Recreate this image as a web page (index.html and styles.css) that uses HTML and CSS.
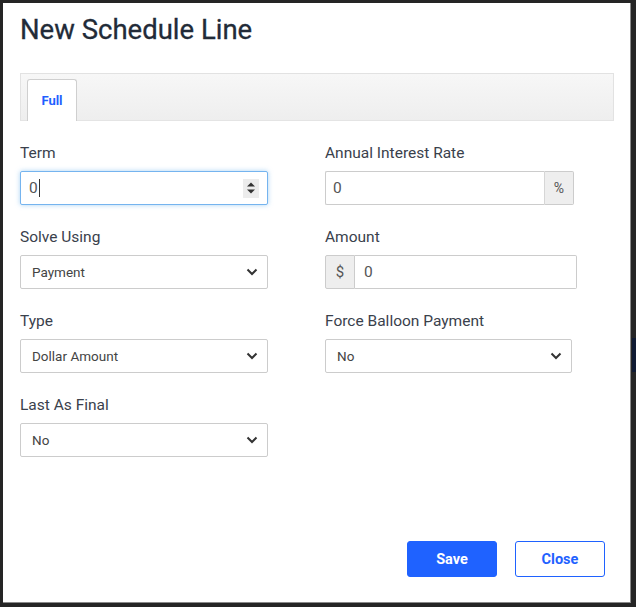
FILE: index.html
```html
<!DOCTYPE html>
<html>
<head>
<meta charset="utf-8">
<link rel="stylesheet" href="styles.css">
</head>
<body>
<div class="backdrop-strip"></div>
<div class="modal">
  <h1 class="title">New Schedule Line</h1>
  <div class="tabs">
    <div class="tab active">Full</div>
  </div>
  <div class="form">
    <div class="field">
      <div class="label">Term</div>
      <div class="control focus w248">
        <span class="value">0<span class="caret"></span></span>
        <span class="spinner">
          <svg width="10" height="14" viewBox="0 0 10 14"><path d="M1 5.5 L5 1.5 L9 5.5 Z M1 8.5 L5 12.5 L9 8.5 Z" fill="#333"/></svg>
        </span>
      </div>
    </div>
    <div class="field">
      <div class="label">Annual Interest Rate</div>
      <div class="group w249">
        <div class="control grow"><span class="value">0</span></div>
        <div class="addon right">%</div>
      </div>
    </div>
    <div class="field">
      <div class="label">Solve Using</div>
      <div class="control select w248">
        <span class="opt">Payment</span>
        <svg class="chev" width="12" height="8" viewBox="0 0 12 8"><polyline points="1.5,1.5 6,6 10.5,1.5" fill="none" stroke="#333" stroke-width="2"/></svg>
      </div>
    </div>
    <div class="field">
      <div class="label">Amount</div>
      <div class="group w252">
        <div class="addon left">$</div>
        <div class="control grow"><span class="value">0</span></div>
      </div>
    </div>
    <div class="field">
      <div class="label">Type</div>
      <div class="control select w248">
        <span class="opt">Dollar Amount</span>
        <svg class="chev" width="12" height="8" viewBox="0 0 12 8"><polyline points="1.5,1.5 6,6 10.5,1.5" fill="none" stroke="#333" stroke-width="2"/></svg>
      </div>
    </div>
    <div class="field">
      <div class="label">Force Balloon Payment</div>
      <div class="control select w247">
        <span class="opt">No</span>
        <svg class="chev" width="12" height="8" viewBox="0 0 12 8"><polyline points="1.5,1.5 6,6 10.5,1.5" fill="none" stroke="#333" stroke-width="2"/></svg>
      </div>
    </div>
    <div class="field">
      <div class="label">Last As Final</div>
      <div class="control select w248">
        <span class="opt">No</span>
        <svg class="chev" width="12" height="8" viewBox="0 0 12 8"><polyline points="1.5,1.5 6,6 10.5,1.5" fill="none" stroke="#333" stroke-width="2"/></svg>
      </div>
    </div>
  </div>
  <div class="footer">
    <button class="btn primary">Save</button>
    <button class="btn outline">Close</button>
  </div>
</div>
</body>
</html>
```
FILE: styles.css
```css
* { box-sizing: border-box; }
html, body { margin: 0; padding: 0; }
body {
  width: 636px;
  height: 607px;
  background: #252525;
  font-family: Roboto, "Liberation Sans", sans-serif;
  position: relative;
  overflow: hidden;
}
.backdrop-strip {
  position: absolute;
  left: 632px;
  top: 338px;
  width: 4px;
  height: 34px;
  background: #0f1a33;
}
.modal {
  position: absolute;
  left: 3px;
  top: 3px;
  width: 628px;
  height: 600px;
  background: #fff;
  border-right: 1px solid #8a8a8a;
  border-bottom: 1px solid #8a8a8a;
  padding: 0 17px;
  display: flex;
  flex-direction: column;
}
.title {
  margin: 11px 0 0 0;
  font-size: 27.5px;
  line-height: 32px;
  font-weight: 400;
  color: #222b38;
  -webkit-text-stroke: 0.3px #222b38;
}
.tabs {
  margin-top: 27px;
  height: 48px;
  width: 594px;
  border: 1px solid #e2e2e2;
  border-bottom-color: #e4e4e4;
  background: linear-gradient(#f7f7f7, #eeeeee);
  display: flex;
  align-items: flex-end;
  padding-left: 6px;
}
.tab {
  width: 50px;
  height: 42px;
  background: #fff;
  border: 1px solid #cfcfcf;
  border-bottom: none;
  border-radius: 3px 3px 0 0;
  color: #1f5fff;
  font-weight: 700;
  font-size: 13px;
  display: flex;
  align-items: center;
  justify-content: center;
  padding-top: 0;
  margin-bottom: -1px;
}
.form {
  margin-top: 23px;
  display: grid;
  grid-template-columns: 305px 300px;
  row-gap: 23px;
}
.label {
  font-size: 15.5px;
  line-height: 18px;
  color: #3a414c;
  margin-bottom: 9px;
}
.control {
  height: 34px;
  border: 1px solid #cccccc;
  border-radius: 2px;
  background: #fff;
  display: flex;
  align-items: center;
  padding: 0 7px;
  font-size: 15.5px;
  color: #555;
}
.w248 { width: 248px; }
.w249 { width: 249px; }
.w252 { width: 252px; }
.w247 { width: 247px; }
.control.focus {
  border-color: #75b4ef;
  box-shadow: 0 0 5px rgba(102, 175, 233, 0.55);
  justify-content: space-between;
  padding-left: 8px;
  padding-right: 8px;
}
.value { color: #555; display: inline-flex; align-items: center; }
.caret {
  display: inline-block;
  width: 1px;
  height: 18px;
  background: #333;
  margin-left: 1px;
}
.spinner {
  width: 16px;
  height: 19px;
  background: #ececec;
  display: flex;
  align-items: center;
  justify-content: center;
}
.group { display: flex; height: 34px; }
.group .control.grow { flex: 1; width: auto; }
.group .addon {
  width: 30px;
  height: 34px;
  background: #eeeeee;
  border: 1px solid #cccccc;
  display: flex;
  align-items: center;
  justify-content: center;
  font-size: 15px;
  color: #555;
}
.addon.right { border-left: 1px solid #d6d6d6; border-radius: 0 2px 2px 0; font-size: 14px; }
.group .control:first-child { border-radius: 2px 0 0 2px; border-right: none; }
.addon.left { border-right: 1px solid #cccccc; border-radius: 2px 0 0 2px; width: 30px; }
.addon.left + .control { border-radius: 0 2px 2px 0; border-left: none; padding-left: 9px; }
.select { justify-content: space-between; padding-left: 11px; padding-right: 9px; }
.opt { font-size: 13.5px; color: #444; }
.footer {
  margin-top: auto;
  margin-bottom: 25px;
  display: flex;
  justify-content: flex-end;
  gap: 18px;
  padding-right: 8px;
}
.btn {
  width: 90px;
  height: 36px;
  border-radius: 3px;
  font-family: Roboto, "Liberation Sans", sans-serif;
  font-size: 14.5px;
  font-weight: 700;
  cursor: pointer;
}
.primary {
  background: #1f62ff;
  border: 1px solid #1f62ff;
  color: #fff;
}
.outline {
  background: #fff;
  border: 1px solid #1f62ff;
  color: #1f62ff;
}
```
